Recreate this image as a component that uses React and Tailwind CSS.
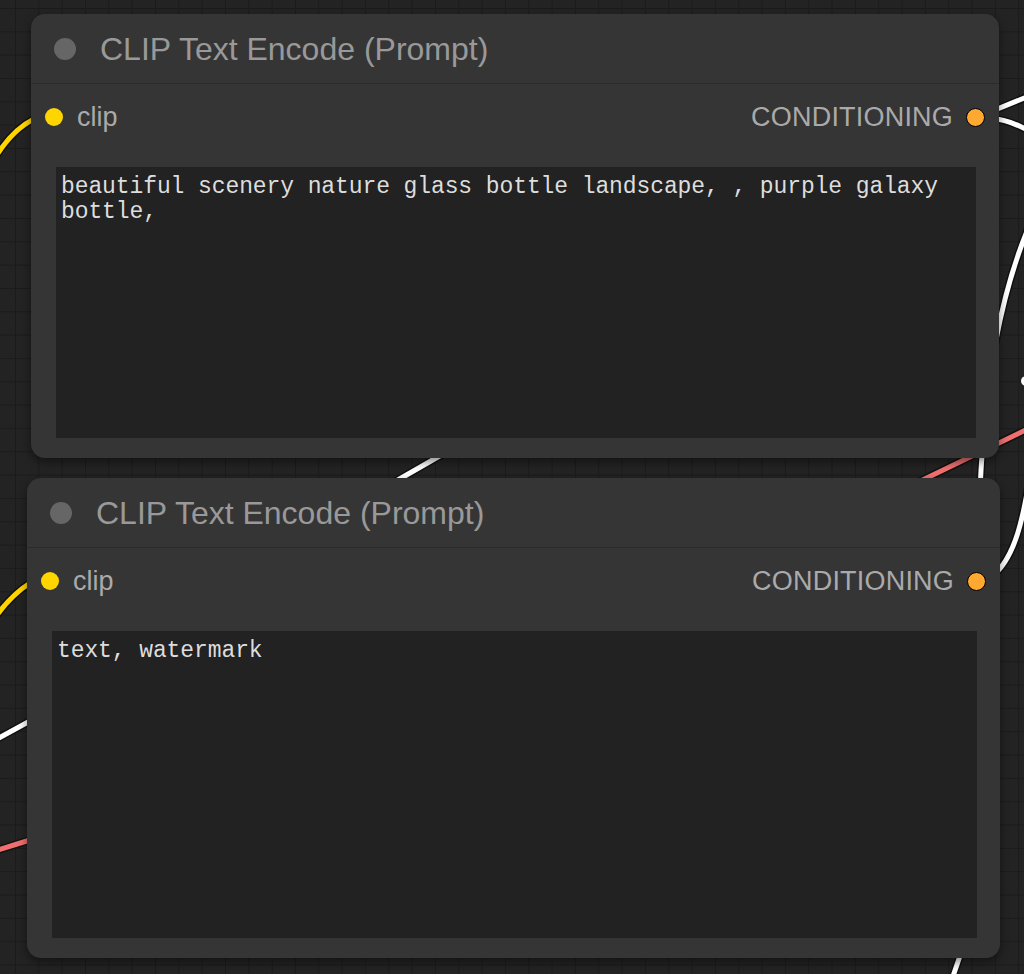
import React from "react";

const PROMPTS = [
  {
    id: 1,
    pos: "left-[31px] top-[14px] w-[968px]",
    boxH: "h-[271px]",
    text: "beautiful scenery nature glass bottle landscape, , purple galaxy bottle,",
  },
  {
    id: 2,
    pos: "left-[27px] top-[478px] w-[973px]",
    boxH: "h-[307px]",
    text: "text, watermark",
  },
];

// фон с сеткой и провода
function Wires() {
  const wire = (d, color, key) => (
    <g key={key}>
      <path d={d} fill="none" stroke="#111" strokeWidth="8" strokeLinecap="round" />
      <path d={d} fill="none" stroke={color} strokeWidth="5" strokeLinecap="round" />
    </g>
  );
  return (
    <svg className="absolute inset-0" width="1024" height="974">
      <defs>
        <pattern id="grid" x="15" y="8" width="23.33" height="23.33" patternUnits="userSpaceOnUse">
          <path d="M 0 0 L 23.33 0 M 0 0 L 0 23.33" stroke="#1b1b1b" strokeWidth="2" fill="none" />
        </pattern>
      </defs>
      <rect width="1024" height="974" fill="#232323" />
      <rect width="1024" height="974" fill="url(#grid)" />
      {[
        ["M -5 158 Q 12 130 34 119", "#ffd500"],
        ["M -5 618 Q 10 596 30 583", "#ffd500"],
        ["M -5 740 L 30 721", "#ffffff"],
        ["M -5 851 L 30 840", "#f07070"],
        ["M 370 496 L 450 450", "#ffffff"],
        ["M 840 520 L 1034 426", "#f07070"],
        ["M 1034 215 C 1000 290, 985 380, 980 490", "#ffffff"],
        ["M 990 578 C 1015 560, 1024 520, 1034 450", "#ffffff"],
        ["M 990 112 L 1034 94", "#ffffff"],
        ["M 990 118 Q 1012 120 1034 134", "#ffffff"],
        ["M 962 950 L 950 985", "#ffffff"],
      ].map(([d, c], i) => wire(d, c, i))}
      <circle cx="1026" cy="381" r="5" fill="#fff" />
    </svg>
  );
}

function PromptNode({ node }) {
  return (
    <div className={`absolute ${node.pos} rounded-[14px] bg-[#353535] pb-[20px] shadow-[0_4px_10px_rgba(0,0,0,0.45)]`}>
      <div className="flex h-[70px] items-center border-b border-[#2b2b2b] pl-[23px]">
        <span className="h-[22px] w-[22px] rounded-full bg-[#666666]" />
        <span className="ml-[24px] text-[32px] leading-none text-[#999999] font-['Liberation_Sans',Arial,sans-serif]">
          CLIP Text Encode (Prompt)
        </span>
      </div>
      <div className="flex h-[66px] items-center justify-between px-[14px] font-['Liberation_Sans',Arial,sans-serif] text-[27px] leading-none text-[#aaaaaa]">
        <div className="flex items-center gap-[14px]">
          <span className="h-[18px] w-[18px] rounded-full bg-[#ffd500]" />
          <span>clip</span>
        </div>
        <div className="flex items-center gap-[13px]">
          <span className="tracking-[0.2px]">CONDITIONING</span>
          <span className="h-[19px] w-[19px] rounded-full border-[1.5px] border-black bg-[#ffa931]" />
        </div>
      </div>
      <textarea
        readOnly
        defaultValue={node.text}
        spellCheck={false}
        className={`mt-[17px] ml-[25px] block w-[calc(100%-48px)] ${node.boxH} resize-none overflow-hidden bg-[#222222] px-[5px] pt-[8px] pb-[5px] font-['Liberation_Mono','Courier_New',monospace] text-[23px] leading-[25px] tracking-[-0.1px] text-[#dddddd] outline-none`}
      />
    </div>
  );
}

export default function App() {
  return (
    <div className="relative h-[974px] w-[1024px] overflow-hidden bg-[#232323]">
      <Wires />
      {PROMPTS.map(n => (
        <PromptNode key={n.id} node={n} />
      ))}
    </div>
  );
}
